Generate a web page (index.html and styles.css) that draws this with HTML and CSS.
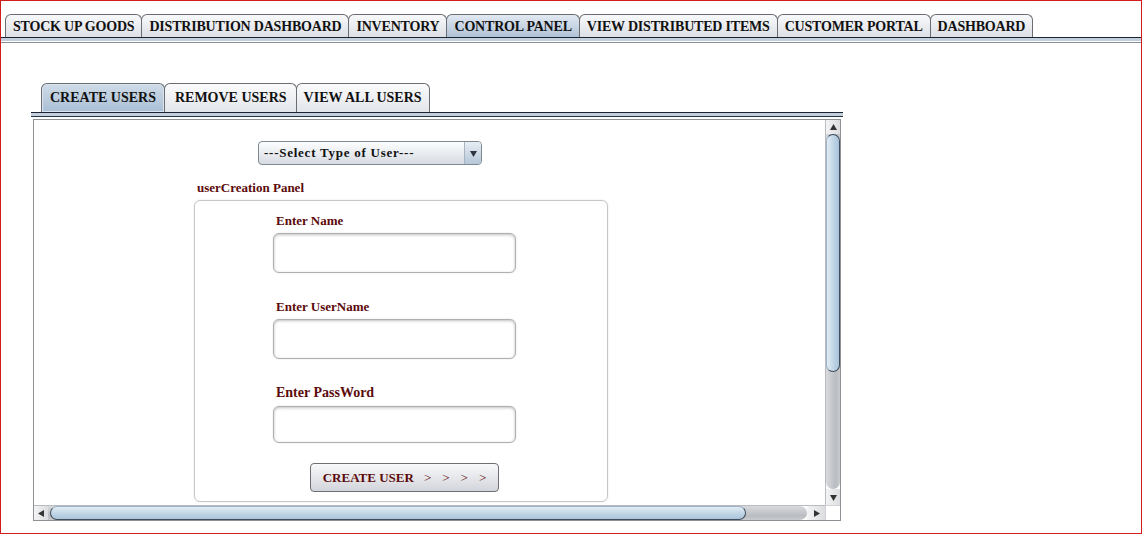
FILE: index.html
```html
<!DOCTYPE html>
<html lang="en">
<head>
<meta charset="utf-8">
<title>Control Panel - Create Users</title>
<link rel="stylesheet" href="styles.css">
</head>
<body>
<div class="window">
  <nav class="tabs main-tabs">
    <span class="tab">STOCK UP GOODS</span>
    <span class="tab">DISTRIBUTION DASHBOARD</span>
    <span class="tab">INVENTORY</span>
    <span class="tab active">CONTROL PANEL</span>
    <span class="tab">VIEW DISTRIBUTED ITEMS</span>
    <span class="tab">CUSTOMER PORTAL</span>
    <span class="tab">DASHBOARD</span>
  </nav>
  <div class="main-rule"></div>

  <section class="control">
    <nav class="tabs sub-tabs">
      <span class="tab active">CREATE USERS</span>
      <span class="tab">REMOVE USERS</span>
      <span class="tab">VIEW ALL USERS</span>
    </nav>
    <div class="sub-rule"></div>

    <div class="pane">
      <div class="viewport">
        <div class="combo">
          <span class="combo-text">---Select Type of User---</span>
          <span class="combo-btn">
            <svg width="7" height="7" viewBox="0 0 7 7"><polygon points="0,1 7,1 3.5,7" fill="#2e3440"/></svg>
          </span>
        </div>
        <div class="panel-title">userCreation Panel</div>
        <div class="panel">
          <label class="field-label">Enter Name</label>
          <div class="input"></div>
          <label class="field-label gap">Enter UserName</label>
          <div class="input"></div>
          <label class="field-label gap big">Enter PassWord</label>
          <div class="input short"></div>
          <div class="create-btn">CREATE USER<span class="chev">&gt;</span><span class="chev">&gt;</span><span class="chev">&gt;</span><span class="chev">&gt;</span></div>
        </div>
      </div>

      <div class="vbar">
        <span class="arrow up"><svg width="7" height="7" viewBox="0 0 7 7"><polygon points="3.5,0 7,6 0,6" fill="#333"/></svg></span>
        <div class="vtrack"><div class="vthumb"></div></div>
        <span class="arrow down"><svg width="7" height="7" viewBox="0 0 7 7"><polygon points="0,1 7,1 3.5,7" fill="#333"/></svg></span>
      </div>

      <div class="hbar">
        <span class="arrow left"><svg width="7" height="7" viewBox="0 0 7 7"><polygon points="0,3.5 6,0 6,7" fill="#333"/></svg></span>
        <div class="htrack"><div class="hthumb"></div></div>
        <span class="arrow right"><svg width="7" height="7" viewBox="0 0 7 7"><polygon points="1,0 7,3.5 1,7" fill="#333"/></svg></span>
      </div>
      <div class="corner"></div>
    </div>
  </section>
</div>
</body>
</html>
```

FILE: styles.css
```css
* { box-sizing: border-box; }

body {
  margin: 0;
  background: #fff;
  font-family: "Liberation Serif", "Times New Roman", serif;
}

.window {
  width: 1142px;
  height: 534px;
  border: 1px solid #d21d1d;
  background: #fff;
  overflow: hidden;
}

/* ---------- tabs ---------- */
.tabs {
  display: flex;
  align-items: flex-end;
}

.tab {
  display: flex;
  align-items: center;
  white-space: nowrap;
  font-weight: bold;
  font-size: 14px;
  color: #111;
  border: 1px solid #6a6d72;
  border-bottom: none;
  border-radius: 6px 6px 0 0;
  background: linear-gradient(#f8f9fb, #dcdfe4);
  margin-right: -1px;
}

.tab.active {
  background: linear-gradient(#e2e9f2, #afc2d6);
}

.main-tabs {
  margin-top: 13px;
  padding-left: 4px;
  height: 23px;
}

.main-tabs .tab {
  height: 23px;
  padding: 1px 7px 0 7px;
  letter-spacing: -0.2px;
}

.main-rule {
  height: 6px;
  border-top: 1px solid #1d2431;
  background: linear-gradient(#c3cfdd 0 3px, #fff 3px 4px, #8b9096 4px 5px);
}

/* ---------- control section ---------- */
.control {
  margin: 40px 0 0 30px;
  width: 812px;
}

.sub-tabs {
  padding-left: 10px;
  height: 29px;
}

.sub-tabs .tab {
  height: 29px;
  padding: 0 8px;
}

.sub-tabs .tab:nth-child(2) { padding: 0 9px 0 10px; }
.sub-tabs .tab:nth-child(3) { padding: 0 7px 0 7px; }

.sub-tabs .tab.active {
  background: linear-gradient(#cfdbe8, #a9bfd5);
  box-shadow: inset 0 0 0 1px #d9e4ef;
}

.sub-tabs .tab:not(.active) {
  background: linear-gradient(#fbfbfc, #e2e5e9);
}

.sub-rule {
  height: 5px;
  border-top: 1px solid #1d2431;
  border-bottom: 1px solid #2a3342;
  background: #c3cfdd;
}

.pane {
  margin: 2px 2px 0 2px;
  height: 402px;
  border: 1px solid #8e9196;
  display: grid;
  grid-template-columns: 1fr 15px;
  grid-template-rows: 1fr 15px;
  background: #fff;
}

.viewport {
  overflow: hidden;
  padding-top: 21px;
}

/* ---------- combo ---------- */
.combo {
  margin-left: 224px;
  width: 224px;
  height: 24px;
  display: flex;
  border: 1px solid #7f8791;
  border-radius: 4px;
  background: linear-gradient(#fcfdfe, #d7dce3);
  overflow: hidden;
}

.combo-text {
  flex: 1;
  display: flex;
  align-items: center;
  padding-left: 5px;
  font-size: 13px;
  letter-spacing: 0.75px;
  font-weight: bold;
  color: #111;
}

.combo-btn {
  width: 17px;
  display: flex;
  align-items: center;
  justify-content: center;
  border-left: 1px solid #a9b4c0;
  background: linear-gradient(#e6edf4, #b6c7d8);
}

/* ---------- panel ---------- */
.panel-title {
  margin: 16px 0 0 163px;
  line-height: 14px;
  font-size: 13px;
  font-weight: bold;
  color: #5c0b0b;
}

.panel {
  margin: 5px 0 0 160px;
  width: 414px;
  height: 302px;
  border: 1px solid #c6c6c6;
  border-radius: 6px;
  box-shadow: 0 0 2px rgba(0, 0, 0, 0.12);
  padding: 12px 0 0 78px;
  display: flex;
  flex-direction: column;
  align-items: flex-start;
}

.field-label {
  margin-left: 3px;
  line-height: 16px;
  font-size: 13px;
  font-weight: bold;
  color: #5c0b0b;
}

.field-label.gap { margin-top: 26px; }

.field-label.big {
  margin-top: 25px;
  font-size: 14px;
  line-height: 18px;
}

.input {
  margin-top: 4px;
  width: 243px;
  height: 40px;
  border: 1px solid #b0b0b0;
  border-radius: 6px;
  background: #fff;
  box-shadow: inset 0 1px 3px rgba(0, 0, 0, 0.25), 0 0 2px rgba(0, 0, 0, 0.12);
}

.input.short { height: 37px; }

.create-btn {
  margin: 20px 0 0 37px;
  width: 189px;
  height: 29px;
  display: flex;
  align-items: center;
  justify-content: center;
  border: 1px solid #6d6f73;
  border-radius: 4px;
  background: linear-gradient(#f9f9fa, #d2d5db);
  font-size: 13px;
  font-weight: bold;
  color: #5c0b0b;
}

.chev {
  font-weight: normal;
  margin-left: 11px;
}

.chev:first-child { margin-left: 10px; }

/* ---------- scrollbars ---------- */
.arrow {
  display: flex;
  align-items: center;
  justify-content: center;
  background: linear-gradient(90deg, #f4f4f5, #dcdde0);
}

.vbar {
  display: flex;
  flex-direction: column;
  border-left: 1px solid #b9bcc0;
}

.arrow.up { height: 14px; }
.arrow.down { height: 16px; }

.vtrack {
  flex: 1;
  background: linear-gradient(90deg, #d9dadd, #b9bcc1 70%, #c9cbce);
  border-radius: 0 0 8px 8px;
}

.vthumb {
  height: 238px;
  border: 1px solid #3e4c5b;
  border-left-color: #9fb2c3;
  border-radius: 10px;
  background: linear-gradient(90deg, #e3edf5, #c2d7e7 50%, #a9c4da);
}

.hbar {
  display: flex;
  border-top: 1px solid #b9bcc0;
}

.arrow.left { width: 14px; }
.arrow.right { width: 18px; }

.htrack {
  flex: 1;
  padding-left: 2px;
  background: linear-gradient(#d9dadd, #b9bcc1 70%, #c9cbce);
  border-radius: 0 8px 8px 0;
}

.hthumb {
  width: 696px;
  height: 100%;
  border: 1px solid #3e4c5b;
  border-top-color: #9fb2c3;
  border-radius: 10px;
  background: linear-gradient(#e3edf5, #c2d7e7 50%, #a9c4da);
}

.corner {
  background: #fff;
  border-left: 1px solid #d0d2d5;
  border-top: 1px solid #d0d2d5;
}
```
